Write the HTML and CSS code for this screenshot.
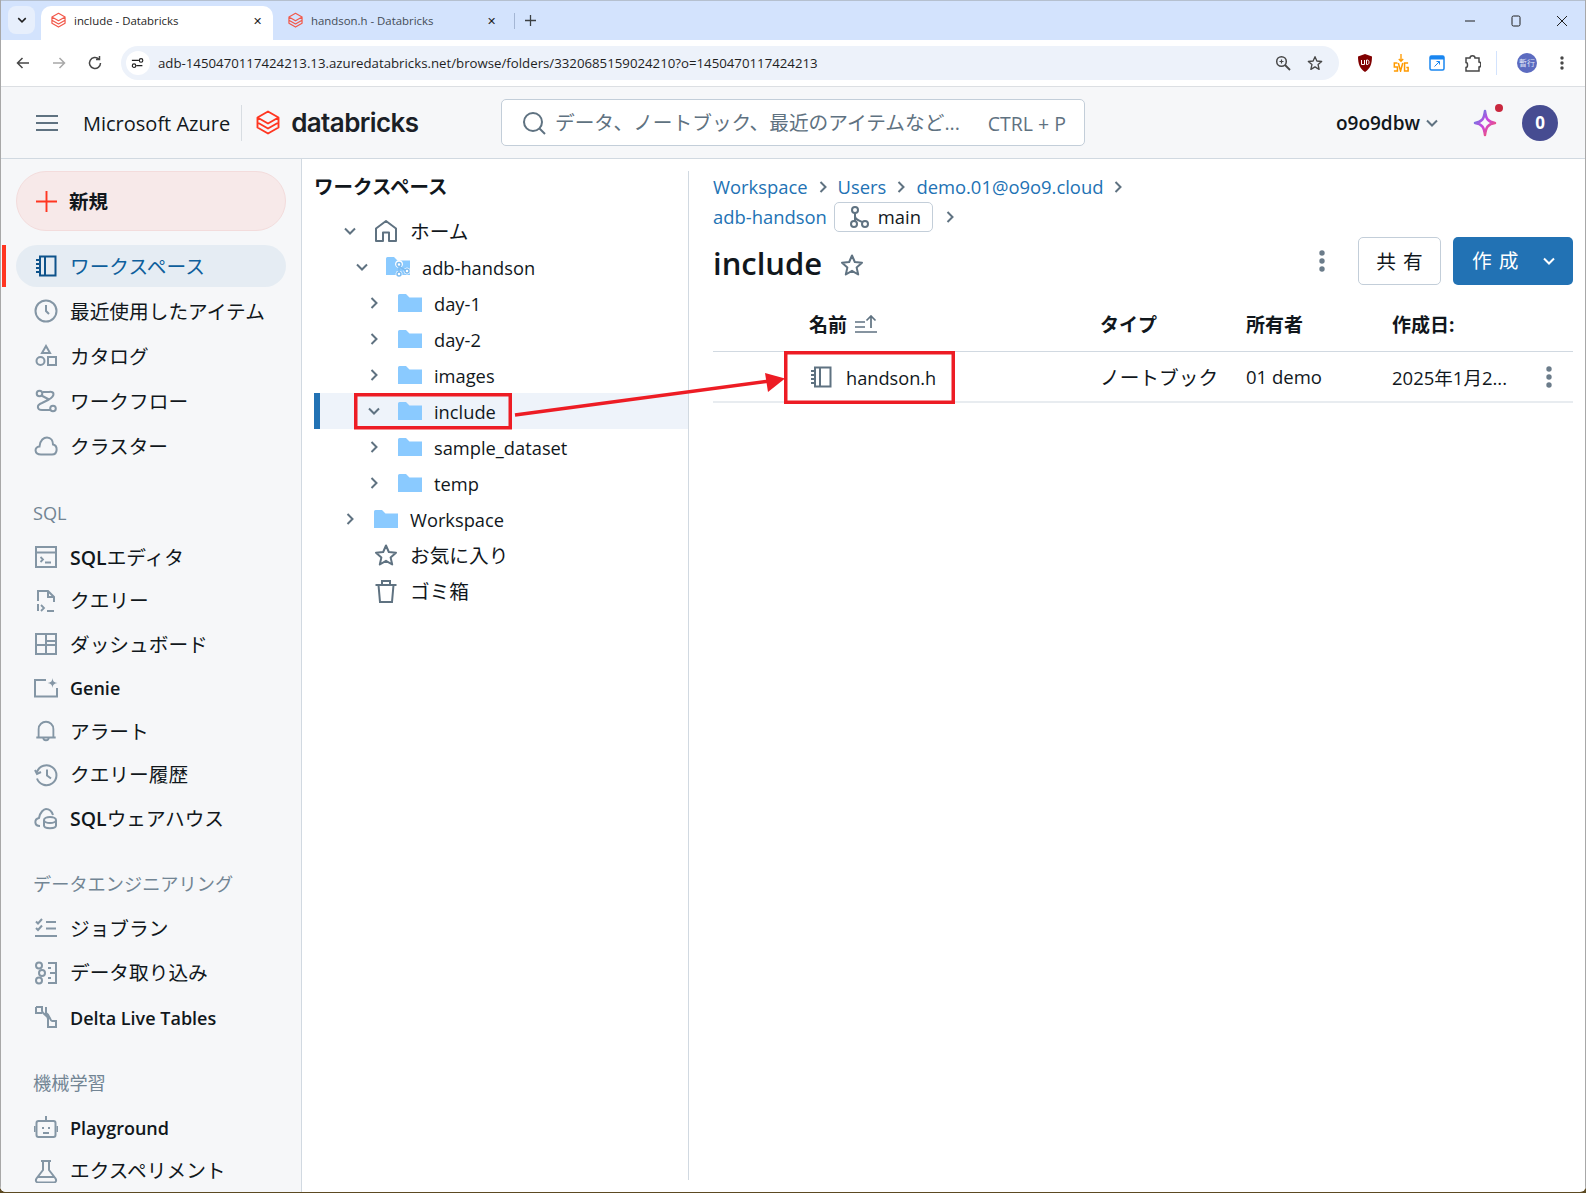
FILE: index.html
```html
<!DOCTYPE html>
<html lang="ja">
<head>
<meta charset="UTF-8">
<meta name="viewport" content="width=device-width, initial-scale=1.0">
<title>include - Databricks</title>
<link rel="stylesheet" href="styles.css">
</head>
<body>
<svg class="sprite" aria-hidden="true">
<symbol id="i-logo" viewBox="0 0 24 26"><path d="M12 1.500 22.500 7.500 12 13.500 1.500 7.500Z M1.500 8V12.500L12 18.500 22.500 12.500V8 M1.500 12.500V17.500L12 23.500 22.500 17.500V12.500" fill="none" stroke="currentColor" stroke-width="1.900" stroke-linejoin="round"/></symbol>
<symbol id="i-notebook" viewBox="0 0 22 22"><path d="M5 1.500H20.500V20.500H5Z M10 1.500V20.500 M1 5H5 M1 9H5 M1 13H5 M1 17H5" fill="none" stroke="currentColor" stroke-width="2"/></symbol>
<symbol id="i-folder" viewBox="0 0 24 18"><path d="M0 1.500Q0 0 1.500 0H8L11.500 3.500H24V18H0Z" fill="#8acaff"/></symbol>
<symbol id="i-chev-r" viewBox="0 0 16 16"><path d="M5.500 3 10.500 8 5.500 13" fill="none" stroke="currentColor" stroke-width="2"/></symbol>
<symbol id="i-chev-d" viewBox="0 0 16 16"><path d="M3 5.500 8 10.500 13 5.500" fill="none" stroke="currentColor" stroke-width="2"/></symbol>
<symbol id="i-star" viewBox="0 0 24 24"><path d="M12 2.500 14.800 9 22 9.700 16.600 14.400 18.200 21.500 12 17.800 5.800 21.500 7.400 14.400 2 9.700 9.200 9Z" fill="none" stroke="currentColor" stroke-width="2" stroke-linejoin="round"/></symbol>
<symbol id="i-kebab" viewBox="0 0 6 22"><circle cx="3" cy="3" r="2.700" fill="currentColor"/><circle cx="3" cy="11" r="2.700" fill="currentColor"/><circle cx="3" cy="19" r="2.700" fill="currentColor"/></symbol>
<symbol id="i-branch" viewBox="0 0 20 22"><g fill="none" stroke="currentColor" stroke-width="2"><circle cx="6" cy="4" r="3"/><circle cx="5" cy="18" r="3"/><circle cx="16" cy="18" r="3"/><path d="M6 7V15 M6 10C6 14 10 14 13 16"/></g></symbol>
</svg>

<div class="tabstrip">
<div class="tab-search"><svg class="ic12"><use href="#i-chev-d"/></svg></div>
<div class="tab tab-active">
<svg class="favicon"><use href="#i-logo"/></svg>
<span class="tab-title">include - Databricks</span>
<span class="tab-close">✕</span>
</div>
<div class="tab tab-second">
<svg class="favicon"><use href="#i-logo"/></svg>
<span class="tab-title tab-title-dim">handson.h - Databricks</span>
<span class="tab-close">✕</span>
</div>
<div class="tab-sep"></div>
<svg class="tab-new" viewBox="0 0 12 12"><path d="M6 0V12M0 6H12" stroke="#3c4043" stroke-width="1.400"/></svg>
<div class="win-controls">
<svg viewBox="0 0 12 12"><path d="M1 6H11" stroke="#1f1f1f" stroke-width="1"/></svg>
<svg viewBox="0 0 12 12"><rect x="2" y="1" width="8" height="10" rx="1.500" fill="none" stroke="#1f1f1f" stroke-width="1"/></svg>
<svg viewBox="0 0 12 12"><path d="M1 1 11 11M11 1 1 11" stroke="#1f1f1f" stroke-width="1"/></svg>
</div>
</div>

<div class="toolbar">
<svg class="nav-btn" viewBox="0 0 16 16"><path d="M14 8H2.500M7.500 3 2.500 8 7.500 13" fill="none" stroke="#474747" stroke-width="1.500"/></svg>
<svg class="nav-btn" viewBox="0 0 16 16"><path d="M2 8H13.500M8.500 3 13.500 8 8.500 13" fill="none" stroke="#a8a8a8" stroke-width="1.500"/></svg>
<svg class="nav-btn" viewBox="0 0 16 16"><path d="M13.500 8A5.500 5.500 0 1 1 11.800 4M12.500 1V4.500H9" fill="none" stroke="#474747" stroke-width="1.500"/></svg>
<div class="omnibox">
<span class="omni-tune"><svg viewBox="0 0 16 16"><path d="M1 5H9M13 11H6" stroke="#1f1f1f" stroke-width="1.300"/><circle cx="11.500" cy="5" r="2" fill="none" stroke="#1f1f1f" stroke-width="1.300"/><circle cx="3.500" cy="11" r="2" fill="none" stroke="#1f1f1f" stroke-width="1.300"/></svg></span>
<span class="omni-url">adb-1450470117424213.13.azuredatabricks.net/browse/folders/3320685159024210?o=1450470117424213</span>
<svg class="omni-icon" viewBox="0 0 16 16"><circle cx="6.500" cy="6.500" r="4.800" fill="none" stroke="#474747" stroke-width="1.500"/><path d="M10 10 15 15" stroke="#474747" stroke-width="1.800"/><path d="M4.500 6.500H8.500M6.500 4.500V8.500" stroke="#474747" stroke-width="1.200"/></svg>
<svg class="omni-icon"><use href="#i-star" class="star-dark"/></svg>
</div>
<div class="ext-icons">
<svg viewBox="0 0 16 18"><path d="M8 0 15 2.500C15 10 13 15 8 18 3 15 1 10 1 2.500Z" fill="#800000"/><path d="M4.500 6V10.500H7.500V6M9.500 6V10.500H10.500C12.500 10.500 12.500 6 10.500 6Z" fill="none" stroke="#fff" stroke-width="1"/></svg>
<svg viewBox="0 0 18 20"><path d="M9 0V8M6.500 5.500 9 8 11.500 5.500" fill="none" stroke="#ff9a00" stroke-width="1.500"/><path d="M5 10H1.500V14.500H5V19H1M6 10 8.500 19 11 10M17 10H13V19H17V15H15" fill="none" stroke="#ff9a00" stroke-width="1.700"/></svg>
<svg viewBox="0 0 16 16"><rect x="1" y="1" width="14" height="14" rx="1.500" fill="#fff" stroke="#1a86f0" stroke-width="1.500"/><rect x="1" y="1" width="14" height="3.500" fill="#1a86f0"/><path d="M5.500 11.500 10.500 6.500M7.500 6.500H10.500V9.500" fill="none" stroke="#1a86f0" stroke-width="1"/></svg>
<svg viewBox="0 0 16 18"><path d="M1 4H5C5 1 10 1 10 4H14V8C16.500 8 16.500 13 14 13V17H1V13.500C3 13.500 3 8.500 1 8.500Z" fill="none" stroke="#474747" stroke-width="1.500"/></svg>
<span class="ext-sep"></span>
<span class="profile">暫行</span>
<svg class="chrome-kebab"><use href="#i-kebab"/></svg>
</div>
</div>

<header class="app-header">
<svg class="hamburger" viewBox="0 0 22 16"><path d="M0 1H22M0 8H22M0 15H22" stroke="#5f7281" stroke-width="2"/></svg>
<span class="azure">Microsoft Azure</span>
<span class="brand-sep"></span>
<svg class="brand-logo"><use href="#i-logo"/></svg>
<span class="brand-name">databricks</span>
<div class="searchbox">
<svg viewBox="0 0 24 24"><circle cx="11" cy="11" r="9" fill="none" stroke="#5f7281" stroke-width="2"/><path d="M17.500 17.500 23 23" stroke="#5f7281" stroke-width="2"/></svg>
<span class="search-ph">データ、ノートブック、最近のアイテムなど...</span>
<span class="search-key">CTRL + P</span>
</div>
<div class="header-right">
<span class="ws-name">o9o9dbw</span>
<svg class="ws-chev"><use href="#i-chev-d"/></svg>
<span class="assistant">
<svg viewBox="0 0 24 28"><defs><linearGradient id="spark" x1="0" y1="0" x2="1" y2="1"><stop offset="0" stop-color="#4299e0"/><stop offset=".5" stop-color="#ca42e0"/><stop offset="1" stop-color="#ff5f46"/></linearGradient></defs><path d="M12 2C13 10 15 13 22 14 15 15 13 18 12 26 11 18 9 15 2 14 9 13 11 10 12 2Z" fill="none" stroke="url(#spark)" stroke-width="2.500" stroke-linejoin="round"/></svg>
<i class="assistant-dot"></i>
</span>
<span class="avatar">0</span>
</div>
</header>

<div class="app-body">
<nav class="sidebar">
<button class="new-btn"><svg viewBox="0 0 22 22"><path d="M11 0V22M0 11H22" stroke="#ff3621" stroke-width="2"/></svg>新規</button>

<div class="nav-group nav-group-wide">
<a class="nav-item active"><svg><use href="#i-notebook"/></svg><span>ワークスペース</span></a>
<a class="nav-item"><svg viewBox="0 0 24 24"><circle cx="12" cy="12" r="10.500" fill="none" stroke="currentColor" stroke-width="2"/><path d="M12 6V12L15 15" fill="none" stroke="currentColor" stroke-width="2"/></svg><span>最近使用したアイテム</span></a>
<a class="nav-item"><svg viewBox="-1 -1 24 24"><path d="M11 1 15 8H7Z" fill="none" stroke="currentColor" stroke-width="2"/><circle cx="5.500" cy="16" r="4" fill="none" stroke="currentColor" stroke-width="2"/><rect x="13" y="12" width="8" height="8" fill="none" stroke="currentColor" stroke-width="2"/></svg><span>カタログ</span></a>
<a class="nav-item"><svg viewBox="-1 -1 24 24"><g fill="none" stroke="currentColor" stroke-width="2"><circle cx="4.500" cy="3.500" r="2.800"/><circle cx="18" cy="18.500" r="2.800"/><path d="M6.500 5.500 14 9.500C20 6 20 1 14 2H7.500 M14 9.500 7 13C1 15 2 20 7 20H15"/></g></svg><span>ワークフロー</span></a>
<a class="nav-item"><svg viewBox="0 0 24 20"><path d="M7 18.500C0 18.500 0 11 5.500 10.500 6 4 10 1.500 13 1.500 17 1.500 19 5 19 8.500 24 9.500 24 18.500 18 18.500Z" fill="none" stroke="currentColor" stroke-width="2"/></svg><span>クラスター</span></a>
</div>

<div class="nav-label nav-label-sql">SQL</div>
<div class="nav-group">
<a class="nav-item"><svg viewBox="-1 -1 24 24"><rect x="1" y="1" width="20" height="20" fill="none" stroke="currentColor" stroke-width="2"/><path d="M1 6.500H21M5.500 11 8 13.500 5.500 16M10 16.500H16" fill="none" stroke="currentColor" stroke-width="1.800"/></svg><span><b class="sql">SQL</b>エディタ</span></a>
<a class="nav-item"><svg viewBox="-1 -1 24 24"><path d="M3 11V1H13L19 7V12 M13 1V7H19 M3 14V21" fill="none" stroke="currentColor" stroke-width="2"/><path d="M6 15 9 18 6 21M12 21H19" fill="none" stroke="currentColor" stroke-width="1.800"/></svg><span>クエリー</span></a>
<a class="nav-item"><svg viewBox="-1 -1 24 24"><path d="M1 1H21V21H1Z M11 1V21 M1 12H11 M11 8H21 M11 12H21" fill="none" stroke="currentColor" stroke-width="2"/></svg><span>ダッシュボード</span></a>
<a class="nav-item nav-latin"><svg viewBox="0 0 24 20"><path d="M12 2H1V18.500H23V10" fill="none" stroke="currentColor" stroke-width="2"/><path d="M18.500 0C19 3.500 20 4.500 23.500 5 20 5.500 19 6.500 18.500 10 18 6.500 17 5.500 13.500 5 17 4.500 18 3.500 18.500 0Z" fill="currentColor"/></svg><span><b>Genie</b></span></a>
<a class="nav-item"><svg viewBox="-1 -1 24 26"><path d="M3 19V10C3 5 7 2 11 2 15 2 19 5 19 10V19 M0.500 19H21.500 M8 19C8 23 14 23 14 19" fill="none" stroke="currentColor" stroke-width="2"/></svg><span>アラート</span></a>
<a class="nav-item"><svg viewBox="0 0 24 24"><path d="M3 9A10 10 0 1 1 3 15.500M1 7 3 11 7 9M13 6.500V12.500L17 15.500" fill="none" stroke="currentColor" stroke-width="2"/></svg><span>クエリー履歴</span></a>
<a class="nav-item"><svg viewBox="0 0 24 22"><path d="M6 19C0 19 0 12 5 11 6 5 10 2 12 2 16 2 18 5 19 8" fill="none" stroke="currentColor" stroke-width="2"/><ellipse cx="16" cy="13" rx="6" ry="3" fill="none" stroke="currentColor" stroke-width="2"/><path d="M10 13V18.500C10 22 22 22 22 18.500V13" fill="none" stroke="currentColor" stroke-width="2"/></svg><span><b class="sql">SQL</b>ウェアハウス</span></a>
</div>

<div class="nav-label">データエンジニアリング</div>
<div class="nav-group nav-group-eng">
<a class="nav-item"><svg viewBox="-1 -1 24 22"><path d="M1 3.500 3 5.500 7 1M1 10 3 12 7 7.500M11 4H21M11 10.500H21M0 18H22" fill="none" stroke="currentColor" stroke-width="2"/></svg><span>ジョブラン</span></a>
<a class="nav-item"><svg viewBox="-1 -1 24 24"><g fill="none" stroke="currentColor" stroke-width="2"><circle cx="4" cy="3.500" r="3"/><circle cx="7" cy="11" r="3"/><circle cx="4" cy="18.500" r="3"/><path d="M13 1H21V21H13M15 11H21M13 6H16M13 16H16"/></g></svg><span>データ取り込み</span></a>
<a class="nav-item nav-latin"><svg viewBox="-1 -1 24 24"><path d="M1 1H7V5C7 8 13 9 13 13V21H21V15H17C15 15 15 9 11 7V1 M1 1V7H7" fill="none" stroke="currentColor" stroke-width="2"/></svg><span><b>Delta Live Tables</b></span></a>
</div>

<div class="nav-label nav-label-ml">機械学習</div>
<div class="nav-group">
<a class="nav-item nav-latin"><svg viewBox="0 0 24 24"><rect x="2.500" y="6" width="19" height="16" rx="2" fill="none" stroke="currentColor" stroke-width="2"/><path d="M12 1V6M0.500 11V17M23.500 11V17M9 14V12M15 14V12M9 18H15" fill="none" stroke="currentColor" stroke-width="2"/></svg><span><b>Playground</b></span></a>
<a class="nav-item"><svg viewBox="-1 -1 24 24"><path d="M6 1H16M8 1V10L1.500 18.500C0 21 1.500 22.500 3.500 22.500H18.500C20.500 22.500 22 21 20.500 18.500L14 10V1 M3 17H19" fill="none" stroke="currentColor" stroke-width="2"/></svg><span>エクスペリメント</span></a>
</div>
</nav>

<section class="tree">
<h2 class="tree-title">ワークスペース</h2>
<div class="tree-row">
<svg class="chev"><use href="#i-chev-d"/></svg>
<svg class="tree-icon" viewBox="0 0 24 24"><path d="M2 22V9.500L12 2 22 9.500V22H15V13.500H9V22Z" fill="none" stroke="#5f7281" stroke-width="2" stroke-linejoin="round"/></svg>
<span class="jp">ホーム</span>
</div>
<div class="tree-row level-1">
<svg class="chev"><use href="#i-chev-d"/></svg>
<svg class="tree-icon" viewBox="0 0 24 20"><use href="#i-folder" width="24" height="18"/><g fill="#fff" stroke="#fff"><circle cx="13" cy="7" r="3.500"/><circle cx="13" cy="17" r="3"/><circle cx="21" cy="14" r="3"/></g><g fill="none" stroke="#7cbbf0" stroke-width="1.500"><circle cx="13" cy="7.500" r="2"/><circle cx="13" cy="17" r="2"/><circle cx="21" cy="14" r="2"/><path d="M13 9.500V15M14 10 19.500 13.500"/></g></svg>
<span>adb-handson</span>
</div>
<div class="tree-row level-2"><svg class="chev"><use href="#i-chev-r"/></svg><svg class="tree-icon folder"><use href="#i-folder"/></svg><span>day-1</span></div>
<div class="tree-row level-2"><svg class="chev"><use href="#i-chev-r"/></svg><svg class="tree-icon folder"><use href="#i-folder"/></svg><span>day-2</span></div>
<div class="tree-row level-2"><svg class="chev"><use href="#i-chev-r"/></svg><svg class="tree-icon folder"><use href="#i-folder"/></svg><span>images</span></div>
<div class="tree-row level-2 selected"><svg class="chev"><use href="#i-chev-d"/></svg><svg class="tree-icon folder"><use href="#i-folder"/></svg><span>include</span></div>
<div class="tree-row level-2"><svg class="chev"><use href="#i-chev-r"/></svg><svg class="tree-icon folder"><use href="#i-folder"/></svg><span>sample_dataset</span></div>
<div class="tree-row level-2"><svg class="chev"><use href="#i-chev-r"/></svg><svg class="tree-icon folder"><use href="#i-folder"/></svg><span>temp</span></div>
<div class="tree-row"><svg class="chev"><use href="#i-chev-r"/></svg><svg class="tree-icon folder"><use href="#i-folder"/></svg><span>Workspace</span></div>
<div class="tree-row"><span class="chev"></span><svg class="tree-icon"><use href="#i-star"/></svg><span class="jp">お気に入り</span></div>
<div class="tree-row"><span class="chev"></span><svg class="tree-icon" viewBox="0 0 24 24"><path d="M1.500 6H22.500M8 6V2H16V6M4.500 6 6 23H18L19.500 6" fill="none" stroke="#5f7281" stroke-width="2"/></svg><span class="jp">ゴミ箱</span></div>
</section>

<main class="main">
<div class="crumbs">
<a>Workspace</a><svg class="crumb-sep"><use href="#i-chev-r"/></svg>
<a>Users</a><svg class="crumb-sep"><use href="#i-chev-r"/></svg>
<a>demo.01@o9o9.cloud</a><svg class="crumb-sep"><use href="#i-chev-r"/></svg>
</div>
<div class="crumbs">
<a>adb-handson</a>
<span class="branch-chip"><svg><use href="#i-branch"/></svg>main</span>
<svg class="crumb-sep"><use href="#i-chev-r"/></svg>
</div>
<div class="title-row">
<h1>include</h1>
<svg class="title-star"><use href="#i-star"/></svg>
<svg class="kebab title-kebab"><use href="#i-kebab"/></svg>
<button class="btn-share">共 有</button>
<button class="btn-create"><span>作 成</span><svg><use href="#i-chev-d"/></svg></button>
</div>
<div class="table-head">
<span></span>
<span class="th-name">名前<svg viewBox="0 0 22 18"><path d="M0 7H10M0 12H10M0 17H22M16 13V1M11.500 5.500 16 1 20.500 5.500" fill="none" stroke="#5f7281" stroke-width="1.700"/></svg></span>
<span>タイプ</span>
<span>所有者</span>
<span>作成日:</span>
<span></span>
</div>
<div class="table-row">
<span></span>
<span class="td-name"><svg><use href="#i-notebook"/></svg><span class="td-file">handson.h</span></span>
<span class="jp">ノートブック</span>
<span>01 demo</span>
<span>2025年1月2...</span>
<svg class="kebab"><use href="#i-kebab"/></svg>
</div>
</main>
</div>

<svg class="annotations" viewBox="0 0 1586 1193">
<rect x="355.750" y="394.750" width="154.500" height="33" fill="none" stroke="#ed1c24" stroke-width="3.500"/>
<rect x="785.750" y="352.750" width="167.500" height="49.500" fill="none" stroke="#ed1c24" stroke-width="3.500"/>
<path d="M515 415 770 381" stroke="#ed1c24" stroke-width="3.500"/>
<path d="M765 373 785 378.500 768 392Z" fill="#ed1c24"/>
</svg>
</body>
</html>
```

FILE: styles.css
```css
* {
  box-sizing: border-box;
}
html {
  height: 1193px;
  background: #5c4a22;
}
body {
  position: relative;
  margin: 0;
  display: flex;
  flex-direction: column;
  height: 1192px;
  overflow: hidden;
  border-radius: 0 0 6px 6px;
  font-family: "Open Sans", "Noto Sans CJK JP", sans-serif;
  font-size: 18.500px;
  color: #11171c;
  background: #fff;
}
/* thin window edges */
body::before,
body::after {
  content: "";
  position: absolute;
  top: 0;
  bottom: 0;
  width: 1px;
  background: #a8a8a8;
  z-index: 2;
}
body::before {
  left: 0;
}
body::after {
  right: 0;
}
svg {
  display: block;
  flex: none;
}
a {
  color: inherit;
  text-decoration: none;
}
button {
  font: inherit;
  cursor: pointer;
}
.sprite {
  display: none;
}
.jp {
  font-size: 19.700px;
}

/* browser chrome */
.tabstrip {
  flex: none;
  height: 40px;
  display: flex;
  align-items: flex-end;
  padding-left: 8px;
  background: #d3e3fd;
  border-top: 1px solid #b5c0cf;
}
.tab-search {
  width: 27px;
  height: 28px;
  margin: 0 6px 6px 0;
  border-radius: 8px;
  background: #e7effc;
  display: flex;
  align-items: center;
  justify-content: center;
  color: #1f1f1f;
}
.ic12 {
  width: 12px;
  height: 12px;
}
.tab {
  width: 232px;
  height: 34px;
  padding: 0 10px 6px;
  display: flex;
  align-items: center;
  font-size: 11.400px;
  color: #1f1f1f;
  border-radius: 10px 10px 0 0;
}
.tab-active {
  background: #fff;
  margin-right: 5px;
}
.tab-second {
  width: 229px;
}
.tab-title {
  flex: 1;
  margin-left: 8px;
}
.tab-title-dim {
  color: #444c56;
}
.tab-close {
  font-size: 11px;
  margin-right: 1px;
}
.favicon {
  width: 15px;
  height: 17px;
  color: #f2584a;
}
.tab-sep {
  width: 1px;
  height: 16px;
  margin: 0 0 11px 7px;
  background: #a4b6d4;
}
.tab-new {
  width: 11px;
  height: 11px;
  margin: 0 0 14px 10px;
}
.win-controls {
  margin-left: auto;
  align-self: center;
  display: flex;
  gap: 34px;
  padding-right: 18px;
}
.win-controls svg {
  width: 12px;
  height: 12px;
}
.toolbar {
  flex: none;
  height: 47px;
  display: flex;
  align-items: center;
  padding-left: 15px;
  background: #fff;
  border-bottom: 1px solid #dcdfe3;
}
.nav-btn {
  width: 16px;
  height: 16px;
  margin-right: 20px;
}
.omnibox {
  width: 1218px;
  height: 34px;
  margin-left: -2px;
  border-radius: 17px;
  background: #edf2fa;
  display: flex;
  align-items: center;
  padding: 0 16px 0 5px;
}
.omni-tune {
  width: 24px;
  height: 24px;
  border-radius: 50%;
  background: #fff;
  display: flex;
  align-items: center;
  justify-content: center;
}
.omni-tune svg {
  width: 14px;
  height: 14px;
}
.omni-url {
  flex: 1;
  margin-left: 8px;
  font-size: 13.240px;
  color: #1f1f1f;
}
.omni-icon {
  width: 16px;
  height: 16px;
  margin-left: 16px;
}
.star-dark {
  color: #474747;
}
.ext-icons {
  display: flex;
  align-items: center;
  margin-left: 18px;
}
.ext-icons > svg {
  width: 16px;
  height: 18px;
  margin-right: 20px;
}
.ext-sep {
  width: 1px;
  height: 24px;
  margin: 0 20px 0 -5px;
  background: #d3e3fd;
}
.profile {
  width: 20px;
  height: 20px;
  border-radius: 50%;
  background: #5c6bc0;
  color: #dfe3f5;
  font-size: 8px;
  line-height: 20px;
  text-align: center;
  margin-right: 23px;
}
.ext-icons > .chrome-kebab {
  width: 4px;
  height: 14px;
  margin: 0;
  color: #474747;
}

/* app header */
.app-header {
  flex: none;
  height: 72px;
  display: flex;
  align-items: center;
  padding-left: 36px;
  background: #f6f7f9;
  border-bottom: 1px solid #d1d9e1;
}
.hamburger {
  width: 22px;
  height: 16px;
}
.azure {
  margin-left: 25px;
  padding-top: 2px;
  font-size: 20px;
  color: #11171c;
}
.brand-sep {
  width: 1px;
  height: 36px;
  margin: 0 14px 0 11px;
  background: #d8dde2;
}
.brand-logo {
  width: 24px;
  height: 26px;
  color: #ff3621;
}
.brand-name {
  margin-left: 11px;
  font-family: "Inter", sans-serif;
  font-size: 26px;
  font-weight: 600;
  letter-spacing: -0.6px;
  color: #1b1f26;
}
.searchbox {
  position: absolute;
  left: 501px;
  top: 99px;
  width: 584px;
  height: 47px;
  display: flex;
  align-items: center;
  padding: 0 18px 0 20px;
  background: #fff;
  border: 1px solid #c3ced9;
  border-radius: 5px;
}
.searchbox svg {
  width: 24px;
  height: 24px;
}
.search-ph {
  flex: 1;
  margin-left: 9px;
  padding-bottom: 2px;
  font-size: 19.700px;
  color: #5f7281;
}
.search-key {
  padding-top: 2px;
  color: #5f7281;
  font-size: 19.500px;
}
.header-right {
  margin-left: auto;
  display: flex;
  align-items: center;
  padding-right: 28px;
}
.ws-name {
  font-size: 19px;
  font-weight: 600;
}
.ws-chev {
  width: 16px;
  height: 16px;
  margin-left: 4px;
  color: #5f7281;
}
.assistant {
  position: relative;
  margin: 0 25px 0 33px;
}
.assistant svg {
  width: 24px;
  height: 28px;
}
.assistant-dot {
  position: absolute;
  left: 22px;
  top: -5px;
  width: 8px;
  height: 8px;
  border-radius: 50%;
  background: #c9283e;
}
.avatar {
  width: 36px;
  height: 36px;
  border-radius: 50%;
  background: #464c91;
  color: #fff;
  font-size: 17px;
  font-weight: 700;
  line-height: 36px;
  text-align: center;
}

/* layout below the header */
.app-body {
  flex: 1;
  min-height: 0;
  display: flex;
}
.sidebar {
  flex: none;
  width: 302px;
  padding: 12px 15px 0 16px;
  background: #f6f7f9;
  border-right: 1px solid #d1d9e1;
  overflow: hidden;
  position: relative;
}
.sidebar::before {
  content: "";
  position: absolute;
  left: 2px;
  top: 86px;
  width: 4px;
  height: 42px;
  background: #ff3621;
}
.new-btn {
  width: 270px;
  height: 60px;
  display: flex;
  align-items: center;
  gap: 12px;
  padding: 0 0 2px 19px;
  background: #f7e9e9;
  border: 1px solid #f3dcdc;
  border-radius: 30px;
  font-size: 19.500px;
  font-weight: 700;
  color: #11171c;
}
.new-btn svg {
  width: 21px;
  height: 21px;
  margin-top: 2px;
}
.nav-group {
  display: flex;
  flex-direction: column;
  gap: 1.500px;
}
.nav-group-wide {
  margin-top: 14px;
  gap: 3px;
}
.nav-group-eng {
  gap: 2.500px;
}
.nav-item {
  height: 42px;
  display: flex;
  align-items: center;
  gap: 12px;
  padding-left: 18px;
  border-radius: 21px;
  font-size: 19.700px;
  color: #11171c;
}
.nav-item span {
  padding-bottom: 2px;
}
.nav-latin span {
  padding: 0;
}
.nav-item svg {
  width: 24px;
  height: 24px;
  color: #8496a5;
}
.nav-item b {
  font-size: 18px;
  font-weight: 600;
}
.nav-item b.sql {
  font-size: 19.500px;
}
.nav-item.active {
  background: #e5ecf3;
  color: #0e5f9c;
}
.nav-item.active svg {
  width: 22px;
  margin: 0 1px;
  color: #0e538b;
}
.nav-label {
  height: 24px;
  margin: 33px 0 11px 17px;
  line-height: 24px;
  font-size: 18.200px;
  color: #728594;
}
.nav-label-sql {
  margin: 34px 0 11px 17px;
}
.nav-label-ml {
  margin-top: 33px;
}

/* workspace tree */
.tree {
  flex: none;
  width: 386px;
  padding: 12px 0 0 12px;
}
.tree-title {
  margin: 0 0 10px;
  height: 32px;
  line-height: 32px;
  font-size: 19.500px;
  font-weight: 700;
}
.tree-row {
  height: 36px;
  display: flex;
  align-items: center;
  padding-left: 24px;
  font-size: 18.300px;
}
.tree-row .jp {
  padding-bottom: 2px;
}
.level-1 {
  padding-left: 36px;
}
.level-2 {
  padding-left: 48px;
}
.selected {
  background: #eef3fa;
  box-shadow: inset 6px 0 0 #2272b4;
}
.chev {
  width: 24px;
  height: 16px;
  color: #5f7281;
}
.tree-icon {
  width: 24px;
  height: 24px;
  margin: 0 12px;
  color: #5f7281;
}
.tree-icon.folder {
  height: 18px;
}

/* main panel */
.main {
  flex: 1;
  min-width: 0;
  margin: 12px 0 12px;
  padding: 1px 13px 0 24px;
  border-left: 1px solid #d1d9e1;
}
.crumbs {
  height: 30px;
  display: flex;
  align-items: center;
  color: #2272b4;
  font-size: 18.400px;
}
.crumbs a {
  padding-bottom: 2px;
}
.crumb-sep {
  width: 16px;
  height: 16px;
  margin: 0 7px;
  color: #5f7281;
}
.branch-chip {
  height: 30px;
  margin: 0 2px 0 7px;
  padding: 0 11px 2px 14px;
  display: flex;
  align-items: center;
  gap: 9px;
  background: #fff;
  border: 1px solid #c3ced9;
  border-radius: 5px;
  color: #11171c;
}
.branch-chip svg {
  width: 20px;
  height: 24px;
  margin-top: 2px;
  color: #5f7281;
}
.title-row {
  height: 48px;
  margin-top: 5px;
  display: flex;
  align-items: center;
}
.title-row h1 {
  margin: 0;
  font-size: 31px;
  font-weight: 600;
  line-height: 48px;
  padding-top: 4px;
}
.title-star {
  width: 24px;
  height: 24px;
  margin: 7px 0 0 18px;
  color: #5f7281;
}
.kebab {
  width: 6px;
  height: 22px;
  color: #6b7c8a;
}
.title-kebab {
  margin-left: auto;
  margin-right: 33px;
}
.btn-share {
  width: 83px;
  height: 48px;
  margin-right: 12px;
  padding-bottom: 3px;
  background: #fff;
  border: 1px solid #c3ced9;
  border-radius: 5px;
  font-size: 19.700px;
  word-spacing: 2px;
  color: #11171c;
}
.btn-create {
  width: 120px;
  height: 48px;
  padding: 0 16px 0 19px;
  display: flex;
  align-items: center;
  justify-content: space-between;
  background: #2272b4;
  border: 0;
  border-radius: 5px;
  font-size: 19.700px;
  word-spacing: 2px;
  color: #fff;
}
.btn-create span {
  padding-bottom: 3px;
}
.btn-create svg {
  width: 16px;
  height: 16px;
}
.table-head,
.table-row {
  display: grid;
  grid-template-columns: 96px 291px 146px 146px 145px 6px;
  align-items: center;
}
.table-head {
  height: 54px;
  margin-top: 13px;
  padding-bottom: 2px;
  border-bottom: 1px solid #d1d9e1;
  font-size: 19px;
  font-weight: 700;
}
.th-name {
  display: flex;
  align-items: center;
  gap: 8px;
}
.th-name svg {
  width: 22px;
  height: 18px;
}
.table-row {
  height: 51px;
  border-bottom: 2px solid #e8ecf0;
}
.table-row .kebab {
  margin-left: 9px;
}
.td-name {
  display: flex;
  align-items: center;
  gap: 14px;
  padding-left: 1px;
  font-size: 18.200px;
}
.td-file {
  padding-top: 2px;
}
.td-name svg {
  width: 22px;
  height: 22px;
  color: #5f7281;
}

/* red marks drawn over the screenshot */
.annotations {
  position: absolute;
  left: 0;
  top: 0;
  width: 1586px;
  height: 1193px;
  pointer-events: none;
}
```
